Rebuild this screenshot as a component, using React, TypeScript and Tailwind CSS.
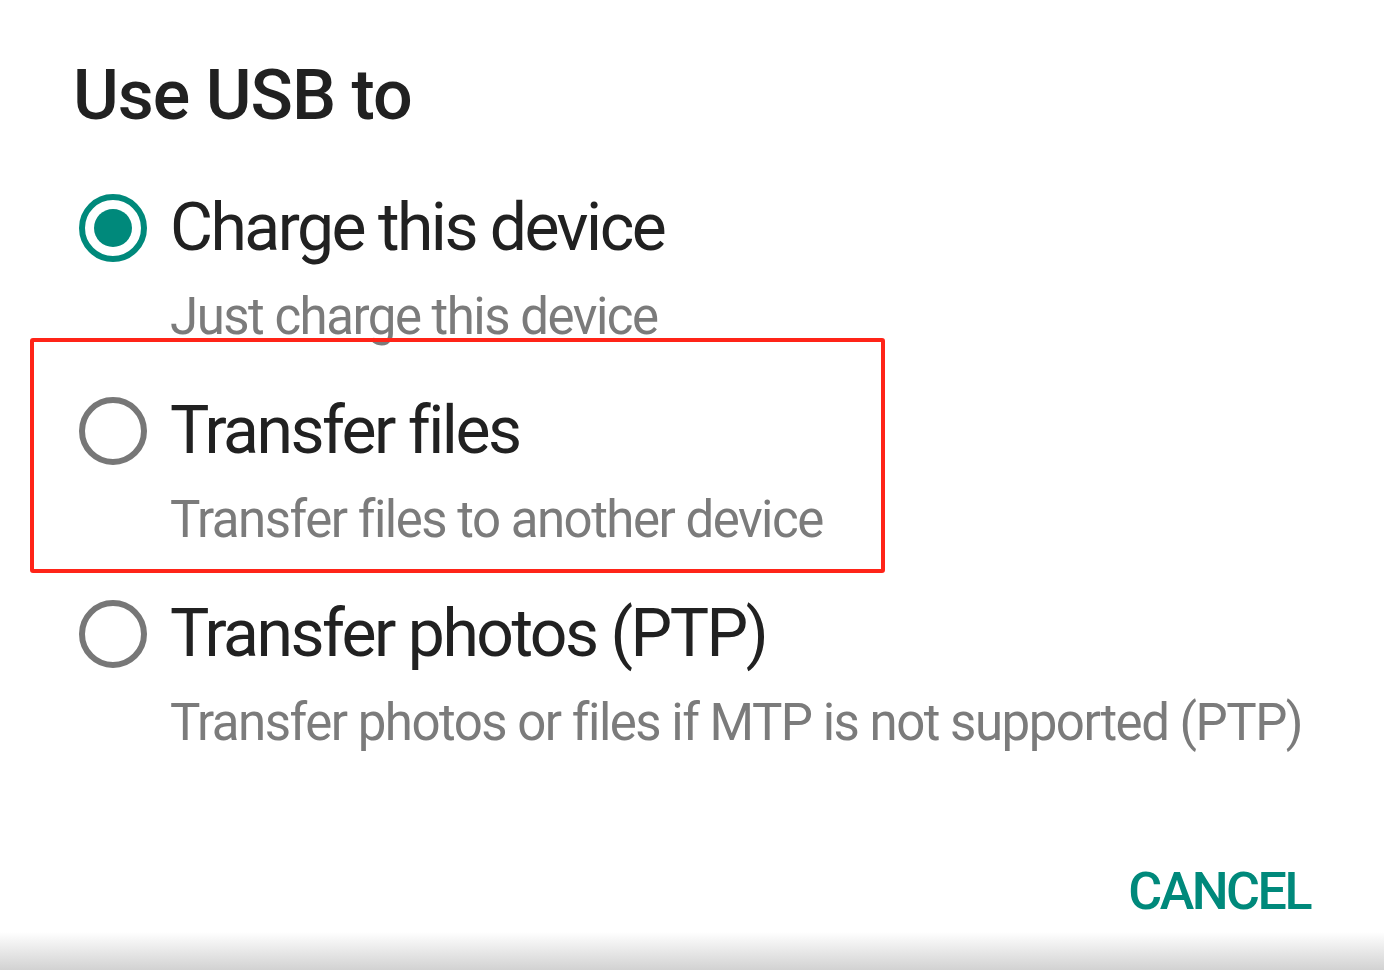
import React from "react";

const options = [
  { title: "Charge this device", sub: "Just charge this device", checked: true },
  { title: "Transfer files", sub: "Transfer files to another device", checked: false },
  { title: "Transfer photos (PTP)", sub: "Transfer photos or files if MTP is not supported (PTP)", checked: false },
];

function Radio({ checked }: { checked: boolean }) {
  const color = checked ? "#00897b" : "#777777";
  return (
    <svg width="68" height="68" viewBox="0 0 68 68" className="shrink-0">
      <circle cx="34" cy="34" r="31" fill="none" stroke={color} strokeWidth="6" />
      {checked && <circle cx="34" cy="34" r="19" fill={color} />}
    </svg>
  );
}

export default function App() {
  return (
    <div
      className="relative w-[1384px] h-[970px] bg-white overflow-hidden flex flex-col"
      style={{ fontFamily: "Roboto, 'Noto Sans', sans-serif" }}
    >
      <h1 className="pl-[73px] pt-[60px] text-[70px] leading-none font-medium text-[#212121] tracking-[-1px]">
        Use USB to
      </h1>

      {/* Options */}
      <div className="mt-[64px] flex flex-col gap-[55px]">
        {options.map((o) => (
          <div key={o.title} className="pl-[79px] flex flex-col">
            <div className="flex items-center gap-[23px]">
              <Radio checked={o.checked} />
              <span className="text-[66px] leading-[66px] text-[#212121] tracking-[-2.5px]">{o.title}</span>
            </div>
            <div className="pl-[91px] mt-[29px] text-[51px] leading-[51px] text-[#7b7b7b] tracking-[-1.5px]">
              {o.sub}
            </div>
          </div>
        ))}
      </div>

      <div className="flex-1" />
      <div className="flex justify-end pr-[74px] pb-[14px]">
        <button className="text-[52px] leading-[52px] font-medium text-[#00897b] tracking-[-2.5px]">CANCEL</button>
      </div>
      <div className="h-[38px] bg-gradient-to-b from-white to-[#d2d2d2]" />

      {/* annotation box */}
      <div className="absolute left-[30px] top-[338px] w-[855px] h-[235px] border-[4px] border-[#ff2418] rounded-[3px]" />
    </div>
  );
}
